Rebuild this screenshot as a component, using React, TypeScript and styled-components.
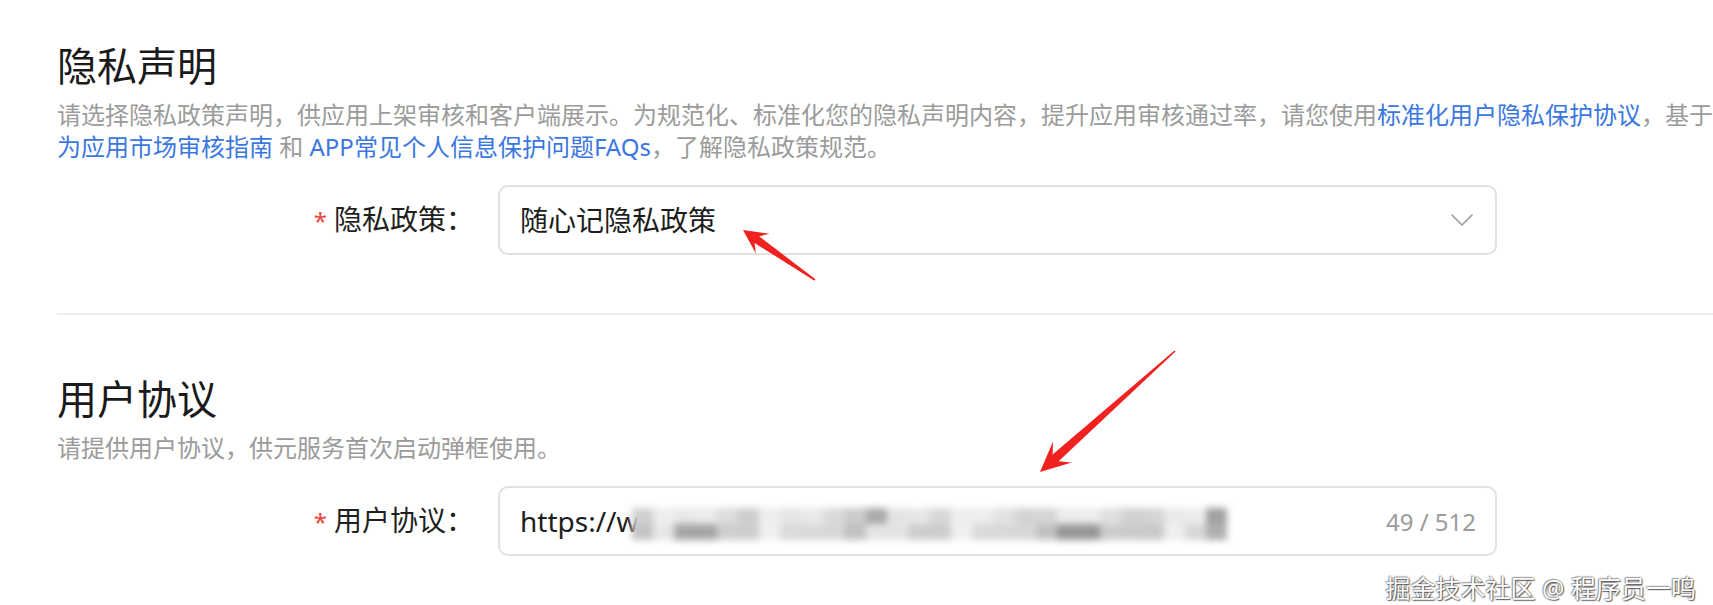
import React from "react";
import styled, { createGlobalStyle } from "styled-components";

const GlobalStyle = createGlobalStyle`
  html, body { margin: 0; padding: 0; background: #ffffff; }
  body {
    overflow: hidden;
    font-family: "Noto Sans", "Noto Sans CJK SC", sans-serif;
    text-autospace: no-autospace;
  }
`;

const Page = styled.div`
  position: relative;
  width: 1713px;
  height: 605px;
  overflow: hidden;
  background: #ffffff;
`;

const Content = styled.main`
  width: 1690px;
  padding: 38px 0 0 57px;
`;

const Section = styled.section<{ $gap?: number }>`
  margin-top: ${(p) => p.$gap ?? 0}px;
`;

const Title = styled.h2`
  margin: 0;
  font-size: 40px;
  line-height: 56px;
  font-weight: 400;
  color: #1a1a1a;
`;

const Desc = styled.p`
  margin: 5px 0 0;
  font-size: 24px;
  line-height: 32px;
  color: #9b9b9b;
`;

const Link = styled.a`
  color: #3a77e0;
  text-decoration: none;
`;

const Divider = styled.div`
  margin-top: 58px;
  height: 2px;
  background: #eeeeee;
`;

const FormRow = styled.div`
  display: flex;
  align-items: center;
  gap: 24px;
  margin-top: 22px;
`;

const Label = styled.label`
  flex: none;
  width: 417px;
  text-align: right;
  white-space: nowrap;
  font-size: 28px;
  line-height: 40px;
  color: #1f1f1f;
`;

const Required = styled.span`
  color: #e8453c;
  font-size: 24px;
  margin-right: 7px;
`;

const Field = styled.div`
  flex: none;
  box-sizing: border-box;
  width: 999px;
  height: 70px;
  display: flex;
  align-items: center;
  justify-content: space-between;
  padding: 0 22px 0 20px;
  border: 2px solid #e1e1e1;
  border-radius: 10px;
  background: #ffffff;
`;

const FieldText = styled.span`
  display: flex;
  align-items: center;
  font-size: 28px;
  line-height: 40px;
  color: #1d1d1d;
  white-space: nowrap;
`;

const Counter = styled.span`
  font-size: 24px;
  color: #9b9b9b;
  margin-right: -3px;
`;

const Mosaic = styled.span`
  display: inline-flex;
  width: 596px;
  height: 32px;
  margin-left: -7px;
  margin-top: 6px;
  filter: blur(3.5px);
`;

const MosaicCol = styled.span`
  display: flex;
  flex-direction: column;
  flex: 1;
`;

const MosaicCell = styled.span`
  flex: 1;
`;

const Watermark = styled.div`
  position: absolute;
  right: 17px;
  top: 575px;
  font-size: 25px;
  line-height: 26px;
  color: #ffffff;
  white-space: nowrap;
  text-shadow: 0 0 2px rgba(0, 0, 0, 0.65), 1px 1px 1px rgba(0, 0, 0, 0.55),
    -1px -1px 1px rgba(0, 0, 0, 0.25);
`;

const Overlay = styled.svg`
  position: absolute;
  left: 0;
  top: 0;
  pointer-events: none;
`;

function arrowPoints(
  x1: number,
  y1: number,
  x2: number,
  y2: number,
  h: number,
  hw: number,
  sw: number
) {
  const dx = x2 - x1;
  const dy = y2 - y1;
  const L = Math.hypot(dx, dy);
  const ux = dx / L;
  const uy = dy / L;
  const px = -uy;
  const py = ux;
  const pt = (a: number, b: number) =>
    `${(x1 + ux * a + px * b).toFixed(1)},${(y1 + uy * a + py * b).toFixed(1)}`;
  return [
    pt(0, -0.8),
    pt(L - h * 0.7, -sw / 2),
    pt(L - h, -hw),
    pt(L, 0),
    pt(L - h, hw),
    pt(L - h * 0.7, sw / 2),
    pt(0, 0.8),
  ].join(" ");
}

const Chevron = () => (
  <svg width="22" height="12" viewBox="0 0 22 12" fill="none">
    <polyline
      points="1,1 11,11 21,1"
      stroke="#9a9a9a"
      strokeWidth="1.6"
      strokeLinecap="round"
      strokeLinejoin="round"
    />
  </svg>
);

const columns = Array.from({ length: 28 }, (_, i) => {
  const r = (i * 29 + 7) % 37;
  const base = 188 + r;
  let top = Math.min(238, base + 12 + ((i * 11) % 18));
  let bot = Math.min(240, base + ((i * 7) % 22));
  if (i === 2 || i === 3) bot = 165;
  if (i === 11) top = 170;
  if (i === 20 || i === 21) bot = 150;
  if (i === 27) { top = 160; bot = 175; }
  const g = (v: number) => `rgb(${v},${v},${v})`;
  return [g(top), g(bot)];
});

export default function App() {
  return (
    <Page>
      <GlobalStyle />
      <Content>
        <Section>
          <Title>隐私声明</Title>
          <Desc>
            请选择隐私政策声明，供应用上架审核和客户端展示。为规范化、标准化您的隐私声明内容，提升应用审核通过率，请您使用
            <Link>标准化用户隐私保护协议</Link>，基于<Link>华为应用市场审核指南</Link> 和{" "}
            <Link>APP常见个人信息保护问题FAQs</Link>，了解隐私政策规范。
          </Desc>
          <FormRow>
            <Label>
              <Required>*</Required>隐私政策：
            </Label>
            <Field>
              <FieldText>随心记隐私政策</FieldText>
              <Chevron />
            </Field>
          </FormRow>
        </Section>
        <Divider />
        <Section $gap={56}>
          <Title>用户协议</Title>
          <Desc>请提供用户协议，供元服务首次启动弹框使用。</Desc>
          <FormRow>
            <Label>
              <Required>*</Required>用户协议：
            </Label>
            <Field>
              <FieldText>
                https://w
                <Mosaic>
                  {columns.map((c, i) => (
                    <MosaicCol key={i}>
                      {c.map((col, j) => (
                        <MosaicCell key={j} style={{ background: col }} />
                      ))}
                    </MosaicCol>
                  ))}
                </Mosaic>
              </FieldText>
              <Counter>49 / 512</Counter>
            </Field>
          </FormRow>
        </Section>
      </Content>
      <Overlay width="1713" height="605" viewBox="0 0 1713 605">
        <polygon points={arrowPoints(815, 280, 743, 230, 24, 12, 8)} fill="#f0211f" />
        <polygon points={arrowPoints(1175, 351, 1040, 472, 30, 14, 9)} fill="#f0211f" />
      </Overlay>
      <Watermark>掘金技术社区 @ 程序员一鸣</Watermark>
    </Page>
  );
}
